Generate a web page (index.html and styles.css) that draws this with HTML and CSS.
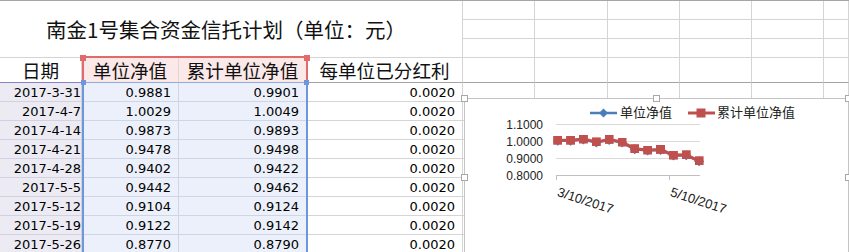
FILE: index.html
```
<!DOCTYPE html>
<html lang="zh-CN">
<head>
<meta charset="utf-8">
<title>南金1号集合资金信托计划</title>
<link rel="stylesheet" href="styles.css">
</head>
<body>
<div class="sheet">
  <div class="c title">南金1号集合资金信托计划（单位：元）</div>
  <div class="c"></div><div class="c"></div><div class="c"></div><div class="c"></div><div class="c"></div><div class="c"></div>
  <div class="c"></div><div class="c"></div><div class="c"></div><div class="c"></div><div class="c"></div><div class="c"></div>
  <div class="c"></div><div class="c"></div><div class="c"></div><div class="c"></div><div class="c"></div><div class="c"></div>

  <div class="c h h-date">日期</div>
  <div class="c h h-sel">单位净值</div>
  <div class="c h h-sel">累计单位净值</div>
  <div class="c h fz">每单位已分红利</div>
  <div class="c fz"></div><div class="c fz"></div><div class="c fz"></div><div class="c fz"></div><div class="c fz"></div><div class="c fz"></div>

  <div class="c d dt">2017-3-31</div><div class="c d v">0.9881</div><div class="c d v">0.9901</div><div class="c d">0.0020</div>
  <div class="c"></div><div class="c"></div><div class="c"></div><div class="c"></div><div class="c"></div><div class="c"></div>
  <div class="c d dt">2017-4-7</div><div class="c d v">1.0029</div><div class="c d v">1.0049</div><div class="c d">0.0020</div>
  <div class="c"></div><div class="c"></div><div class="c"></div><div class="c"></div><div class="c"></div><div class="c"></div>
  <div class="c d dt">2017-4-14</div><div class="c d v">0.9873</div><div class="c d v">0.9893</div><div class="c d">0.0020</div>
  <div class="c"></div><div class="c"></div><div class="c"></div><div class="c"></div><div class="c"></div><div class="c"></div>
  <div class="c d dt">2017-4-21</div><div class="c d v">0.9478</div><div class="c d v">0.9498</div><div class="c d">0.0020</div>
  <div class="c"></div><div class="c"></div><div class="c"></div><div class="c"></div><div class="c"></div><div class="c"></div>
  <div class="c d dt">2017-4-28</div><div class="c d v">0.9402</div><div class="c d v">0.9422</div><div class="c d">0.0020</div>
  <div class="c"></div><div class="c"></div><div class="c"></div><div class="c"></div><div class="c"></div><div class="c"></div>
  <div class="c d dt">2017-5-5</div><div class="c d v">0.9442</div><div class="c d v">0.9462</div><div class="c d">0.0020</div>
  <div class="c"></div><div class="c"></div><div class="c"></div><div class="c"></div><div class="c"></div><div class="c"></div>
  <div class="c d dt">2017-5-12</div><div class="c d v">0.9104</div><div class="c d v">0.9124</div><div class="c d">0.0020</div>
  <div class="c"></div><div class="c"></div><div class="c"></div><div class="c"></div><div class="c"></div><div class="c"></div>
  <div class="c d dt">2017-5-19</div><div class="c d v">0.9122</div><div class="c d v">0.9142</div><div class="c d">0.0020</div>
  <div class="c"></div><div class="c"></div><div class="c"></div><div class="c"></div><div class="c"></div><div class="c"></div>
  <div class="c d dt">2017-5-26</div><div class="c d v">0.8770</div><div class="c d v">0.8790</div><div class="c d">0.0020</div>
  <div class="c"></div><div class="c"></div><div class="c"></div><div class="c"></div><div class="c"></div><div class="c"></div>

  <div class="sel-head"></div>
  <div class="sel-data"></div>

  <div class="chart">
    <span class="hd tl"></span><span class="hd tm"></span><span class="hd tr"></span>
    <span class="hd ml"></span><span class="hd mr"></span>
    <svg class="plot" width="385" height="160" viewBox="0 0 385 160">
      <defs>
        <marker id="dia" markerUnits="userSpaceOnUse" markerWidth="10" markerHeight="10" refX="5" refY="5">
          <path d="M5 0 L10 5 L5 10 L0 5Z" fill="#4a7ebb"/>
        </marker>
        <marker id="sq" markerUnits="userSpaceOnUse" markerWidth="9" markerHeight="9" refX="4.5" refY="4.5">
          <rect width="9" height="9" fill="#c0504d"/>
        </marker>
      </defs>
      <g class="legend">
        <line x1="126" y1="15" x2="153" y2="15" stroke="#4a7ebb" stroke-width="2.5"/>
        <path d="M139.5 10.5 L144 15 L139.5 19.5 L135 15Z" fill="#4a7ebb"/>
        <text x="156" y="19">单位净值</text>
        <line x1="224" y1="15" x2="251" y2="15" stroke="#c0504d" stroke-width="3"/>
        <rect x="232.5" y="10.5" width="9" height="9" fill="#c0504d"/>
        <text x="253" y="19">累计单位净值</text>
      </g>
      <g class="grid">
        <line x1="92" y1="26.5" x2="236" y2="26.5"/>
        <line x1="92" y1="43.5" x2="236" y2="43.5"/>
        <line x1="92" y1="60.5" x2="236" y2="60.5"/>
      </g>
      <g class="axis">
        <line x1="92" y1="77.5" x2="236" y2="77.5"/>
        <line x1="92.5" y1="77" x2="92.5" y2="82"/>
        <line x1="205.5" y1="77" x2="205.5" y2="82"/>
      </g>
      <g class="ylab">
        <text x="79" y="30.8">1.1000</text>
        <text x="79" y="47.6">1.0000</text>
        <text x="79" y="64.6">0.9000</text>
        <text x="79" y="81.6">0.8000</text>
      </g>
      <g class="xlab">
        <text transform="translate(92.6 97.8) rotate(18)">3/10/2017</text>
        <text transform="translate(205.6 97.8) rotate(18)">5/10/2017</text>
      </g>
      <polyline class="s1" points="93.7,42.8 106.6,42.8 119.4,41.6 132.3,44.5 145.1,42 158,44.6 170.8,51.3 183.7,52.6 196.5,52 209.4,57.6 222.2,57.3 235.1,63.3"/>
      <polyline class="s2" points="93.7,42.2 106.6,42.2 119.4,41 132.3,43.9 145.1,41.4 158,44 170.8,50.7 183.7,52 196.5,51.4 209.4,57.1 222.2,56.8 235.1,62.8"/>
    </svg>
  </div>
</div>
</body>
</html>
```
FILE: styles.css
```
* { box-sizing: border-box; }

html, body {
  margin: 0;
  background: #fff;
  overflow: hidden;
}

.sheet {
  position: relative;
  display: grid;
  grid-template-columns: 82px 97px 128px 156px 72px 73px 72px 72px 72px 1fr;
  grid-template-rows: 19px 19px 19px 25px repeat(9, 19px);
  width: 849px;
  border-top: 1px solid #a6a6a6;
  font-family: "DejaVu Sans", "Noto Sans CJK SC", sans-serif;
  font-size: 13px;
  color: #000;
}

.c {
  border-right: 1px solid #d4d4d4;
  border-bottom: 1px solid #d4d4d4;
}

.title {
  grid-column: 1 / 5;
  grid-row: 1 / 4;
  display: flex;
  align-items: center;
  justify-content: center;
  padding-right: 10px;
  font-family: "Noto Sans CJK SC", sans-serif;
  font-size: 20.5px;
  color: #111;
}

.h {
  display: flex;
  align-items: flex-end;
  justify-content: center;
  padding-bottom: 2px;
  font-family: "Noto Sans CJK SC", sans-serif;
  font-size: 18.6px;
  line-height: 1;
  color: #111;
}

.fz { border-bottom-color: #a3a3a3; }
.h-date { border-bottom-color: #8b80c3; }
.h-sel {
  background: #fbe8e8;
  border-bottom-color: #a9bde6;
  border-right-color: #e6d4d8;
}

.d {
  display: flex;
  align-items: center;
  justify-content: flex-end;
  padding-right: 7px;
  white-space: nowrap;
}

.dt {
  background: #ecebf3;
  padding-right: 0;
  border-bottom-color: #d3d1e0;
}

.v {
  background: #ebf0fa;
  border-bottom-color: #cdd5e6;
  border-right-color: #cdd5e6;
}

/* chart data range highlights */
.sel-head {
  position: absolute;
  grid-column: 2 / 4;
  grid-row: 4;
  top: -2px;
  left: 0;
  right: -1px;
  bottom: 1px;
  border: 2px solid #e36a6a;
  border-bottom: 0;
}

.sel-head::before,
.sel-head::after,
.sel-data::before,
.sel-data::after {
  content: "";
  position: absolute;
  width: 6px;
  height: 6px;
  background: #e36a6a;
  top: -3px;
}

.sel-head::before { left: -4px; }
.sel-head::after { right: -4px; }

.sel-data {
  position: absolute;
  grid-column: 2 / 4;
  grid-row: 5 / 14;
  top: -1px;
  left: 0;
  right: -1px;
  bottom: 0;
  border: 2px solid #6f96dd;
  border-top: 1px solid #8faae0;
}

.sel-data::before,
.sel-data::after {
  width: 5px;
  height: 5px;
  background: #6f96dd;
  top: -3px;
}

.sel-data::before { left: -3px; }
.sel-data::after { right: -3px; }

/* floating chart */
.chart {
  position: absolute;
  grid-column: 5 / -1;
  grid-row: 5 / -1;
  left: 1px;
  top: 15px;
  width: 385px;
  height: 160px;
  background: #fff;
  border: 1px solid #c4c4c4;
}

.plot {
  display: block;
  margin: -1px 0 0 -1px;
  overflow: visible;
}

.hd {
  position: absolute;
  width: 7px;
  height: 7px;
  background: #fff;
  border: 1px solid #a8a8a8;
}

.tl { left: -4px; top: -4px; }
.tm { left: calc(50% - 4px); top: -4px; }
.tr { right: -4px; top: -4px; }
.ml { left: -4px; top: calc(50% - 4px); }
.mr { right: -4px; top: calc(50% - 4px); }

.legend text {
  font-family: "Noto Sans CJK SC", sans-serif;
  font-size: 13px;
  fill: #222;
}

.grid line { stroke: #d9d9d9; stroke-width: 1; }
.axis line { stroke: #bfbfbf; stroke-width: 1; }

.ylab text {
  font-family: "Liberation Sans", Arial, sans-serif;
  font-size: 12px;
  fill: #222;
  text-anchor: end;
}

.xlab text {
  font-family: "Liberation Sans", Arial, sans-serif;
  font-size: 13px;
  fill: #222;
}

.s1 {
  fill: none;
  stroke: #4a7ebb;
  stroke-width: 2.5;
  stroke-linejoin: round;
  marker-start: url(#dia);
  marker-mid: url(#dia);
  marker-end: url(#dia);
}

.s2 {
  fill: none;
  stroke: #c0504d;
  stroke-width: 3;
  stroke-linejoin: round;
  marker-start: url(#sq);
  marker-mid: url(#sq);
  marker-end: url(#sq);
}
```
